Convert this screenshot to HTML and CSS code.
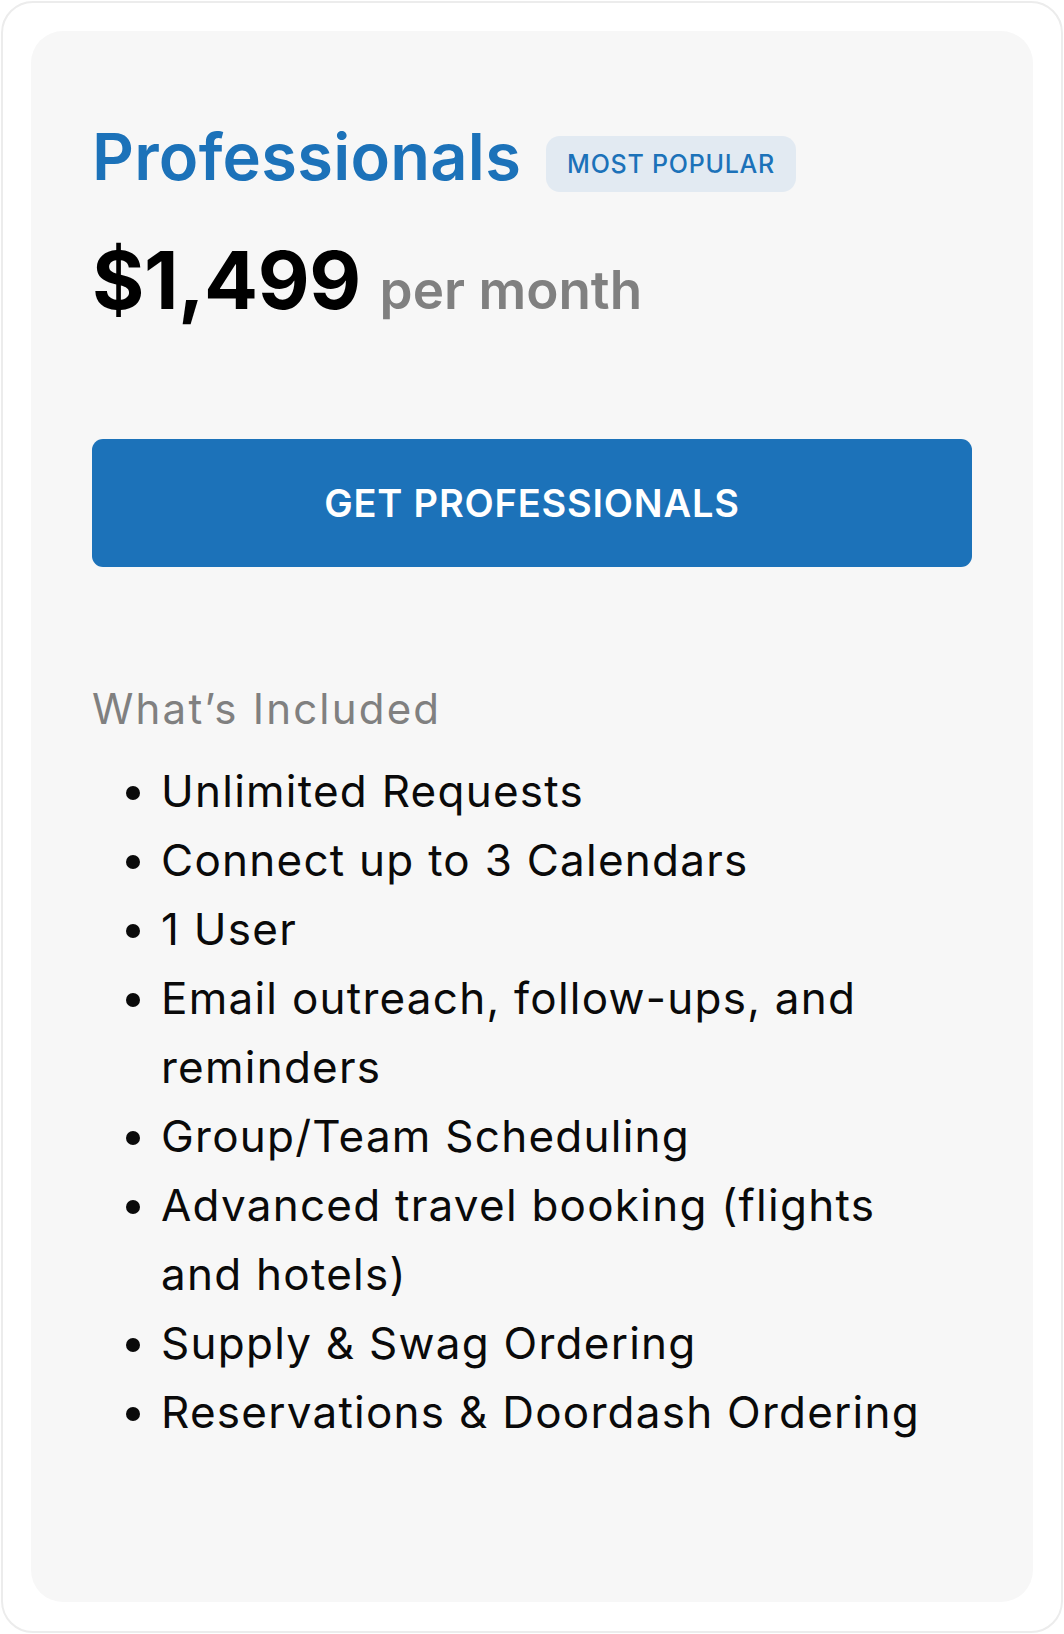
FILE: index.html
```html
<!DOCTYPE html>
<html lang="en">
<head>
<meta charset="utf-8">
<title>Professionals Plan</title>
<link rel="stylesheet" href="styles.css">
</head>
<body>
<div class="frame">
  <section class="card">
    <div class="title-row">
      <h1 class="plan-name">Professionals</h1>
      <span class="badge">MOST POPULAR</span>
    </div>
    <div class="price-row">
      <span class="price">$1,499</span>
      <span class="period">per month</span>
    </div>
    <button class="cta">GET PROFESSIONALS</button>
    <h2 class="included-title">What’s Included</h2>
    <ul class="features">
      <li>Unlimited Requests</li>
      <li>Connect up to 3 Calendars</li>
      <li>1 User</li>
      <li>Email outreach, follow-ups, and reminders</li>
      <li>Group/Team Scheduling</li>
      <li>Advanced travel booking (flights and hotels)</li>
      <li>Supply &amp; Swag Ordering</li>
      <li>Reservations &amp; Doordash Ordering</li>
    </ul>
  </section>
</div>
</body>
</html>
```

FILE: styles.css
```css
* {
  box-sizing: border-box;
}

html, body {
  margin: 0;
  padding: 0;
  background: #ffffff;
}

body {
  font-family: "Inter", "Noto Sans", "Liberation Sans", sans-serif;
  color: #000000;
}

.frame {
  margin: 1px;
  width: 1062px;
  height: 1632px;
  border: 2px solid #ececec;
  border-radius: 32px;
  padding: 28px 28px 29px 28px;
}

.card {
  background: #f7f7f7;
  border-radius: 32px;
  height: 1571px;
  padding: 87px 61px 0 61px;
}

.title-row {
  display: flex;
  align-items: center;
  gap: 25px;
}

.plan-name {
  margin: 0;
  font-size: 65px;
  line-height: 1.2;
  font-weight: 600;
  color: #1c72b9;
  letter-spacing: 0.25px;
}

.badge {
  margin-top: 13px;
  display: inline-flex;
  align-items: center;
  height: 56px;
  padding: 0 21px;
  border-radius: 14px;
  background: #e2eaf2;
  color: #1c72b9;
  font-size: 25px;
  font-weight: 500;
  line-height: 1.2;
  letter-spacing: 0.75px;
}

.price-row {
  margin-top: 36px;
  display: flex;
  align-items: baseline;
  gap: 19px;
  line-height: 1.2;
}

.price {
  font-size: 80px;
  font-weight: 700;
  color: #000000;
  letter-spacing: -0.5px;
}

.period {
  font-size: 53px;
  font-weight: 600;
  color: #808080;
}

.cta {
  margin-top: 111px;
  display: flex;
  align-items: center;
  justify-content: center;
  width: 100%;
  height: 128px;
  border: none;
  border-radius: 11px;
  background: #1c72b9;
  color: #ffffff;
  font-family: inherit;
  font-size: 38px;
  font-weight: 600;
  letter-spacing: 0.8px;
  padding: 0;
}

.included-title {
  margin: 117px 0 0 0;
  font-size: 42px;
  line-height: 1.2;
  font-weight: 400;
  color: #808080;
  letter-spacing: 2.2px;
}

.features {
  margin: 23px 0 0 0;
  padding: 0 40px 0 69px;
  font-size: 44px;
  line-height: 69px;
  letter-spacing: 1.25px;
  color: #0a0a0a;
}
```
